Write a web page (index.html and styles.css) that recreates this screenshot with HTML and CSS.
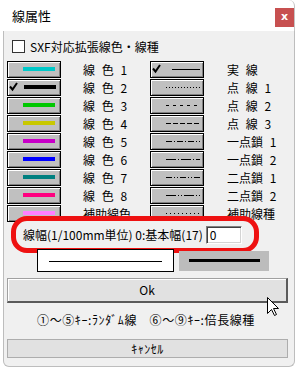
FILE: index.html
```html
<!DOCTYPE html>
<html lang="ja">
<head>
    <meta charset="UTF-8">
    <meta name="viewport" content="width=device-width, initial-scale=1.0">
    <title>線属性</title>
    <link rel="stylesheet" href="styles.css">
</head>
<body>

    <div class="window">
        <div class="titlebar">
            <span class="title">線属性</span>
            <span class="close">x</span>
        </div>

        <div class="content">
            <div class="sxf"><span class="checkbox"></span>SXF対応拡張線色・線種</div>

            <div class="lists">
                <div class="col">
                    <div class="item"><div class="swatch"><svg width="52" height="15"><rect x="15" y="5" width="32" height="4" fill="#00c8c8"/></svg></div><span class="label">線 色 1</span></div>
                    <div class="item"><div class="swatch"><svg width="52" height="15"><path d="M2 6.5 L4.5 9.5 L9 3" stroke="#000" stroke-width="2" fill="none"/><rect x="16" y="5" width="32" height="4" fill="#000"/></svg></div><span class="label">線 色 2</span></div>
                    <div class="item"><div class="swatch"><svg width="52" height="15"><rect x="15" y="5" width="32" height="4" fill="#00c800"/></svg></div><span class="label">線 色 3</span></div>
                    <div class="item"><div class="swatch"><svg width="52" height="15"><rect x="15" y="5" width="32" height="4" fill="#c8c800"/></svg></div><span class="label">線 色 4</span></div>
                    <div class="item"><div class="swatch"><svg width="52" height="15"><rect x="15" y="5" width="32" height="4" fill="#c800c8"/></svg></div><span class="label">線 色 5</span></div>
                    <div class="item"><div class="swatch"><svg width="52" height="15"><rect x="15" y="5" width="32" height="4" fill="#0000ff"/></svg></div><span class="label">線 色 6</span></div>
                    <div class="item"><div class="swatch"><svg width="52" height="15"><rect x="15" y="5" width="32" height="4" fill="#008080"/></svg></div><span class="label">線 色 7</span></div>
                    <div class="item"><div class="swatch"><svg width="52" height="15"><rect x="15" y="5" width="32" height="4" fill="#ff0080"/></svg></div><span class="label">線 色 8</span></div>
                    <div class="item"><div class="swatch"><svg width="52" height="15"><rect x="15" y="5" width="32" height="4" fill="#ff80ff"/></svg></div><span class="label">補助線色</span></div>
                </div>
                <div class="col">
                    <div class="item"><div class="swatch"><svg width="52" height="15"><path d="M2 6.5 L4.5 9.5 L9 3" stroke="#000" stroke-width="2" fill="none"/><rect x="21" y="7" width="28" height="1" fill="#000"/></svg></div><span class="label">実 線</span></div>
                    <div class="item"><div class="swatch"><svg width="52" height="15"><line x1="15" y1="7.5" x2="49" y2="7.5" stroke="#000" stroke-dasharray="1 2" shape-rendering="crispEdges"/></svg></div><span class="label">点 線 1</span></div>
                    <div class="item"><div class="swatch"><svg width="52" height="15"><line x1="15" y1="7.5" x2="49" y2="7.5" stroke="#000" stroke-dasharray="3 4" shape-rendering="crispEdges"/></svg></div><span class="label">点 線 2</span></div>
                    <div class="item"><div class="swatch"><svg width="52" height="15"><line x1="15" y1="7.5" x2="49" y2="7.5" stroke="#000" stroke-dasharray="5 2" shape-rendering="crispEdges"/></svg></div><span class="label">点 線 3</span></div>
                    <div class="item"><div class="swatch"><svg width="52" height="15"><line x1="15" y1="7.5" x2="49" y2="7.5" stroke="#000" stroke-dasharray="6 2 1 2" shape-rendering="crispEdges"/></svg></div><span class="label">一点鎖 1</span></div>
                    <div class="item"><div class="swatch"><svg width="52" height="15"><line x1="15" y1="7.5" x2="49" y2="7.5" stroke="#000" stroke-dasharray="10 2 1 2" shape-rendering="crispEdges"/></svg></div><span class="label">一点鎖 2</span></div>
                    <div class="item"><div class="swatch"><svg width="52" height="15"><line x1="15" y1="7.5" x2="49" y2="7.5" stroke="#000" stroke-dasharray="6 2 1 2 1 2" shape-rendering="crispEdges"/></svg></div><span class="label">二点鎖 1</span></div>
                    <div class="item"><div class="swatch"><svg width="52" height="15"><line x1="15" y1="7.5" x2="49" y2="7.5" stroke="#000" stroke-dasharray="10 2 1 2 1 2" shape-rendering="crispEdges"/></svg></div><span class="label">二点鎖 2</span></div>
                    <div class="item"><div class="swatch"><svg width="52" height="15"><line x1="15" y1="7.5" x2="49" y2="7.5" stroke="#000" stroke-dasharray="1 3" shape-rendering="crispEdges"/></svg></div><span class="label">補助線種</span></div>
                </div>
            </div>

            <div class="width-row">
                <span>線幅(1/100mm単位) 0:基本幅(17)</span>
                <div class="field">0</div>
            </div>

            <div class="preview">
                <div class="pv-thin"><div class="line-thin"></div></div>
                <div class="pv-thick"><div class="line-thick"></div></div>
            </div>

            <div class="btn ok">Ok</div>
            <p class="hint">①～⑤ｷｰ:ﾗﾝﾀﾞﾑ線　⑥～⑨ｷｰ:倍長線種</p>
            <div class="btn">ｷｬﾝｾﾙ</div>
        </div>

        <svg class="cursor" width="13" height="20" viewBox="0 0 13 20">
            <path d="M0.5 0.5 L0.5 16.5 L4.5 12.5 L7.5 18.5 L9.5 17.5 L6.5 11.5 L11.5 11.5 Z" fill="#fff" stroke="#000" stroke-width="1"/>
        </svg>
    </div>

</body>
</html>
```

FILE: styles.css
```css
body {
    margin: 0;
    background: #fff;
    font-family: "Noto Sans CJK JP", "Noto Sans", sans-serif;
    font-size: 12px;
    color: #000;
}
.window {
    position: relative;
    width: 292px;
    margin-left: 3px;
}
.titlebar {
    height: 31px;
    display: flex;
    justify-content: space-between;
    align-items: flex-start;
    padding-left: 9px;
    background: #fff;
    border-right: 1px solid #c4c4c4;
    border-top-right-radius: 6px;
    box-sizing: border-box;
}
.title {
    font-size: 13px;
    line-height: 14px;
    margin-top: 9px;
}
.close {
    width: 19px;
    height: 19px;
    margin-top: 8px;
    background: #c75050;
    color: #fff;
    font-family: "DejaVu Sans", sans-serif;
    font-weight: bold;
    font-size: 11px;
    line-height: 17px;
    text-align: center;
}
.content {
    background: #f0f0f0;
    border: 1px solid #bdbdbd;
    border-top: none;
    border-radius: 0 0 6px 6px;
    padding: 9px 0 8px 0;
}
.sxf {
    display: flex;
    align-items: center;
    height: 13px;
    line-height: 13px;
    padding-left: 8px;
    gap: 5px;
}
.checkbox {
    width: 11px;
    height: 11px;
    border: 1px solid #333;
    background: #fff;
}
.lists {
    display: grid;
    grid-template-columns: 143px 1fr;
    padding-left: 3px;
    margin-top: 8px;
}
.col {
    display: flex;
    flex-direction: column;
    gap: 1px;
}
.item {
    display: flex;
    align-items: center;
    height: 17px;
}
.swatch {
    width: 54px;
    height: 17px;
    box-sizing: border-box;
    border: 1px solid #000;
    background: #c0c0c0;
    box-shadow: inset 1px 1px #fff, inset -1px -1px #808080;
}
.swatch svg {
    display: block;
}
.label {
    margin-left: 22px;
    white-space: pre;
    word-spacing: 4px;
    line-height: 17px;
}
.col + .col .label {
    margin-left: 23px;
}
.width-row {
    position: relative;
    margin: -6px 0 0 7px;
    width: 248px;
    height: 37px;
    box-sizing: border-box;
    border: 5px solid #ee1111;
    border-radius: 16px;
    background: #f0f0f0;
    display: flex;
    align-items: center;
    gap: 3px;
    padding-left: 7px;
}
.field {
    width: 36px;
    height: 18px;
    box-sizing: border-box;
    background: #fff;
    border: 1px solid;
    border-color: #808080 #fff #fff #808080;
    box-shadow: inset 1px 1px #404040, inset -1px -1px #d4d4d4;
    padding-left: 3px;
    line-height: 16px;
}
.preview {
    position: relative;
    display: flex;
    align-items: center;
    gap: 5px;
    margin: -4px 0 0 33px;
    height: 23px;
}
.pv-thin {
    width: 137px;
    height: 23px;
    box-sizing: border-box;
    border: 1px solid #000;
    background: #fff;
    display: flex;
    align-items: center;
    justify-content: center;
    padding-top: 2px;
}
.line-thin {
    width: 113px;
    height: 1px;
    background: #000;
}
.pv-thick {
    width: 90px;
    height: 20px;
    background: #bcbcbc;
    display: flex;
    align-items: center;
    justify-content: center;
}
.line-thick {
    width: 71px;
    height: 3px;
    background: #000;
}
.btn {
    margin-left: 3px;
    width: 281px;
    height: 19px;
    box-sizing: border-box;
    background: #e1e1e1;
    border: 1px solid #adadad;
    text-align: center;
    line-height: 17px;
    letter-spacing: 0.5px;
}
.ok {
    margin-top: 6px;
    height: 25px;
    border-color: #a0a0a0 #5a5a5a #5a5a5a #a0a0a0;
    border-width: 1px 2px 2px 1px;
    box-shadow: inset 1px 1px #fff;
    line-height: 22px;
    letter-spacing: 0;
}
.hint {
    margin: 9px 0 11px 0;
    line-height: 16px;
    text-align: center;
    padding-right: 6px;
    letter-spacing: 0.6px;
}
.cursor {
    position: absolute;
    left: 264px;
    top: 297px;
}
```
